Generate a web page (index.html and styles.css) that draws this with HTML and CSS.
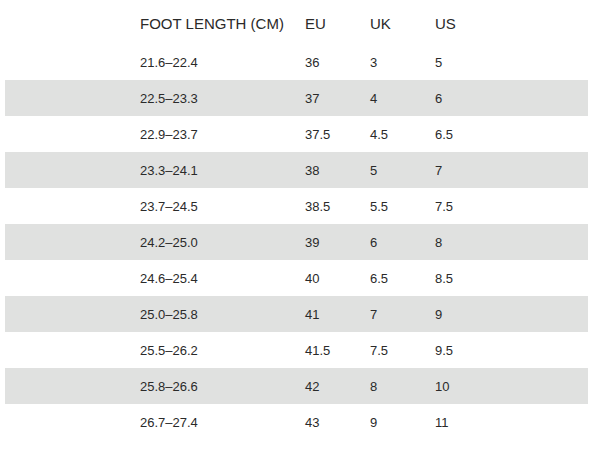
FILE: index.html
```html
<!DOCTYPE html>
<html>
<head>
<meta charset="utf-8">
<link rel="stylesheet" href="styles.css">
</head>
<body>
<div class="chart">
  <div class="row head"><span>FOOT LENGTH (CM)</span><span>EU</span><span>UK</span><span>US</span></div>
  <div class="row"><span>21.6–22.4</span><span>36</span><span>3</span><span>5</span></div>
  <div class="row alt"><span>22.5–23.3</span><span>37</span><span>4</span><span>6</span></div>
  <div class="row"><span>22.9–23.7</span><span>37.5</span><span>4.5</span><span>6.5</span></div>
  <div class="row alt"><span>23.3–24.1</span><span>38</span><span>5</span><span>7</span></div>
  <div class="row"><span>23.7–24.5</span><span>38.5</span><span>5.5</span><span>7.5</span></div>
  <div class="row alt"><span>24.2–25.0</span><span>39</span><span>6</span><span>8</span></div>
  <div class="row"><span>24.6–25.4</span><span>40</span><span>6.5</span><span>8.5</span></div>
  <div class="row alt"><span>25.0–25.8</span><span>41</span><span>7</span><span>9</span></div>
  <div class="row"><span>25.5–26.2</span><span>41.5</span><span>7.5</span><span>9.5</span></div>
  <div class="row alt"><span>25.8–26.6</span><span>42</span><span>8</span><span>10</span></div>
  <div class="row"><span>26.7–27.4</span><span>43</span><span>9</span><span>11</span></div>
</div>
</body>
</html>
```
FILE: styles.css
```css
html, body {
  margin: 0;
  padding: 0;
  background: #ffffff;
}
.chart {
  margin-left: 5px;
  width: 583px;
  font-family: "Liberation Sans", Arial, sans-serif;
  color: #2a2a2a;
}
.row {
  display: grid;
  grid-template-columns: 165px 65px 65px 1fr;
  align-items: center;
  height: 36px;
  padding-left: 135px;
  font-size: 13px;
}
.row.head {
  height: 44px;
  font-size: 15px;
  padding-bottom: 0;
  align-items: start;
  padding-top: 0;
}
.row.head span {
  margin-top: 15px;
}
.row.alt {
  background: #e0e1e0;
}
```
